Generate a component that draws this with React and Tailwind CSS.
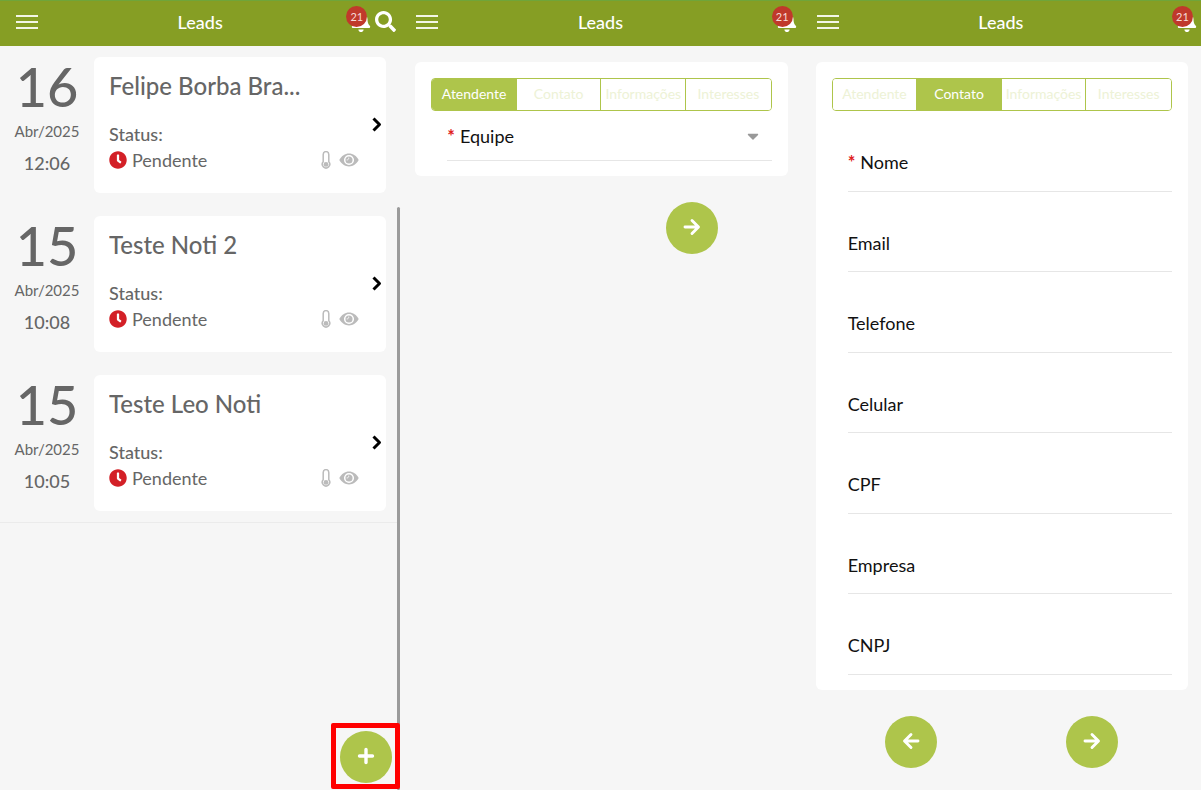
import React from "react";
import { FaBell, FaSearch, FaClock, FaCaretDown } from "react-icons/fa";

const leads = [
  { day: "16", month: "Abr/2025", time: "12:06", name: "Felipe Borba Bra..." },
  { day: "15", month: "Abr/2025", time: "10:08", name: "Teste Noti 2" },
  { day: "15", month: "Abr/2025", time: "10:05", name: "Teste Leo Noti" },
];

const steps = ["Atendente", "Contato", "Informações", "Interesses"];

const contactFields = [
  { id: "nome", label: "Nome", required: true },
  { id: "email", label: "Email" },
  { id: "telefone", label: "Telefone" },
  { id: "celular", label: "Celular" },
  { id: "cpf", label: "CPF" },
  { id: "empresa", label: "Empresa" },
  { id: "cnpj", label: "CNPJ" },
];

function ThermometerIcon() {
  return (
    <svg viewBox="0 0 10 18" className="h-[18px] w-[10px]" fill="none">
      <path
        d="M2.2 3.4a2.8 2.8 0 0 1 5.6 0v7.4a3.7 3.7 0 1 1-5.6 0z"
        stroke="#bbbbbb"
        strokeWidth="1.5"
      />
      <circle cx="5" cy="13.4" r="2.4" fill="#bbbbbb" />
    </svg>
  );
}

function EyeIcon() {
  return (
    <svg viewBox="0 0 20 14" className="ml-2 mr-[13px] h-[14px] w-5" fill="none">
      <path
        d="M.3 7C2.6 3 6 .6 10 .6S17.4 3 19.7 7C17.4 11 14 13.4 10 13.4S2.6 11 .3 7z"
        fill="#bbbbbb"
      />
      <circle cx="10" cy="7" r="4.3" stroke="#ffffff" strokeWidth="1.5" />
      <path d="M9.6 4.7a1.7 1.7 0 0 1-1.9 2.2" stroke="#ffffff" strokeWidth="0.9" />
    </svg>
  );
}

function ChevronIcon() {
  return (
    <svg viewBox="0 0 10 16" className="h-4 w-2.5" fill="none">
      <path d="M1.5 1.500l6 6-6 6" stroke="#000000" strokeWidth="3" strokeLinejoin="round" />
    </svg>
  );
}

function ArrowIcon({ left }) {
  return (
    <svg viewBox="0 0 18 18" className="size-[18px]" fill="none">
      <path
        d={left ? "M16 9H3M9 2.5L2.5 9 9 15.5" : "M2 9h13M9 2.5L15.5 9 9 15.5"}
        stroke="#ffffff"
        strokeWidth="2.9"
        strokeLinecap="round"
        strokeLinejoin="round"
      />
    </svg>
  );
}

function PlusIcon() {
  return (
    <svg viewBox="0 0 18 18" className="size-[18px]" fill="none">
      <path d="M9 2.500v13M2.500 9h13" stroke="#ffffff" strokeWidth="3.4" strokeLinecap="round" />
    </svg>
  );
}

function Header({ search }) {
  return (
    <header className="grid h-[46px] grid-cols-[1fr_auto_1fr] items-center border-t border-[#6fa53a] bg-[#869e24] px-1 pb-1 text-white">
      <button type="button" aria-label="Menu" className="ml-3 flex w-[22px] flex-col gap-1">
        <span className="h-0.5 w-full bg-[#f3f6e6]" />
        <span className="h-0.5 w-full bg-[#f3f6e6]" />
        <span className="h-0.5 w-full bg-[#f3f6e6]" />
      </button>
      <h1 className="text-lg font-medium leading-6">Leads</h1>
      <div className="flex items-center justify-end gap-1">
        <button type="button" aria-label="Notificações" className="relative">
          <FaBell className="h-[21px] w-5" />
          <span className="absolute -left-[5px] -top-[5px] flex size-[21px] items-center justify-center rounded-full bg-[#c0392b] text-[11px] leading-none text-[#f6dcd8]">
            21
          </span>
        </button>
        {search && (
          <button type="button" aria-label="Buscar">
            <FaSearch className="size-[21px]" />
          </button>
        )}
      </div>
    </header>
  );
}

function LeadRow({ lead }) {
  return (
    <li className="flex items-start">
      <div className="flex w-[94px] flex-col items-center text-[#666666]">
        <span className="text-[54px] font-medium leading-[60px]">{lead.day}</span>
        <span className="mt-1 text-[15px] leading-5">{lead.month}</span>
        <span className="mt-2.5 text-lg font-medium leading-6">{lead.time}</span>
      </div>
      <article className="flex h-[136px] min-w-0 flex-1 items-center rounded-md bg-white pl-[15px] pr-1 text-[#666666]">
        <div className="min-w-0 flex-1 pb-1.5">
          <h2 className="truncate text-2xl font-medium leading-8">{lead.name}</h2>
          <p className="mt-5 text-lg font-medium leading-6">Status:</p>
          <div className="flex h-7 items-center">
            <FaClock className="size-[18px] text-[#d32027]" />
            <span className="ml-[5px] flex-1 text-lg leading-6">Pendente</span>
            <ThermometerIcon />
            <EyeIcon />
          </div>
        </div>
        <button type="button" aria-label="Abrir lead">
          <ChevronIcon />
        </button>
      </article>
    </li>
  );
}

function Steps({ current }) {
  return (
    <nav className="grid h-[33px] grid-cols-4 divide-x divide-[#aec54b] overflow-hidden rounded border border-[#aec54b]">
      {steps.map((step) => (
        <button
          key={step}
          type="button"
          className={
            step === current
              ? "bg-[#aec54b] pb-0.5 text-sm text-white"
              : "bg-white pb-0.5 text-sm text-[#edf2d6]"
          }
        >
          {step}
        </button>
      ))}
    </nav>
  );
}

function RoundButton({ label, children }) {
  return (
    <button
      type="button"
      aria-label={label}
      className="flex size-[52px] items-center justify-center rounded-full bg-[#aec54b] pb-0.5 text-white"
    >
      {children}
    </button>
  );
}

function FieldLabel({ id, required, children }) {
  return (
    <label htmlFor={id} className="flex gap-[5px] text-lg leading-6 text-[#111111]">
      {required && <span className="font-bold text-[#e02020]">*</span>}
      {children}
    </label>
  );
}

export default function App() {
  return (
    <div className="grid min-h-screen grid-cols-3 bg-[#f6f6f6] font-['Lato','Noto_Sans',sans-serif]">
      <section className="relative">
        <Header search />
        <ul className="flex flex-col gap-[23px] border-b border-[#ebebeb] pb-[11px] pr-[14px] pt-[11px]">
          {leads.map((lead) => (
            <LeadRow key={lead.time} lead={lead} />
          ))}
        </ul>
        <div className="absolute bottom-0 right-0 top-[207px] w-[3px] rounded-full bg-[#9b9b9b]" />
        <div className="absolute bottom-px right-0 rounded-xs border-[5px] border-[#ff0000] bg-[#f6f6f6] pb-px pl-1 pr-[3px] pt-[3px]">
          <RoundButton label="Novo lead">
            <PlusIcon />
          </RoundButton>
        </div>
      </section>

      <section>
        <Header />
        <main className="pl-[15px] pr-[13px] pt-4">
          <div className="rounded-md bg-white px-4 pb-[15px] pt-4">
            <Steps current="Atendente" />
            <div className="ml-4 flex h-[50px] items-center border-b border-[#e6e6e6]">
              <FieldLabel id="equipe" required>
                Equipe
              </FieldLabel>
              <select id="equipe" className="h-6 min-w-0 flex-1 appearance-none bg-transparent outline-none" />
              <FaCaretDown className="mr-2.5 size-[18px] text-[#999999]" />
            </div>
          </div>
          <div className="mt-[26px] grid grid-cols-2 justify-items-center px-[5px]">
            <div className="col-start-2">
              <RoundButton label="Avançar">
                <ArrowIcon />
              </RoundButton>
            </div>
          </div>
        </main>
      </section>

      <section>
        <Header />
        <main className="pl-[15px] pr-[13px] pt-4">
          <div className="rounded-md bg-white px-4 pb-[15px] pt-4">
            <Steps current="Contato" />
            <form className="ml-4 grid h-[564px] auto-rows-fr">
              {contactFields.map((field) => (
                <div key={field.id} className="flex items-start gap-2 border-b border-[#e6e6e6] pt-[39px]">
                  <FieldLabel id={field.id} required={field.required}>
                    {field.label}
                  </FieldLabel>
                  <input
                    id={field.id}
                    type="text"
                    className="h-6 min-w-0 flex-1 bg-transparent text-lg outline-none"
                  />
                </div>
              ))}
            </form>
          </div>
          <div className="mt-[26px] grid grid-cols-2 justify-items-center px-[5px]">
            <RoundButton label="Voltar">
              <ArrowIcon left />
            </RoundButton>
            <RoundButton label="Avançar">
              <ArrowIcon />
            </RoundButton>
          </div>
        </main>
      </section>
    </div>
  );
}
